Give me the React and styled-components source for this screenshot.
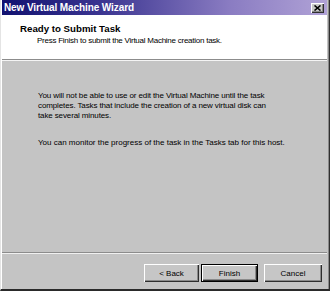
import React from "react";
import styled, { createGlobalStyle } from "styled-components";

const Global = createGlobalStyle`
  html, body { margin: 0; padding: 0; background: #c4c4c4; }
  body { font-family: "Liberation Sans", Arial, sans-serif; }
`;

const Window = styled.div`
  width: 330px;
  height: 291px;
  box-sizing: border-box;
  display: flex;
  flex-direction: column;
  background: #c4c4c4;
  border-left: 1px solid #e4e4e4;
  border-right: 1px solid #303030;
  border-bottom: 2px solid #2a2a2a;
  padding: 0 2px 0 1px;
  box-shadow: inset 1px 0 0 #ffffff, inset -1px 0 0 #8a8a8a;
`;

const TitleBar = styled.div`
  height: 15px;
  flex-shrink: 0;
  display: flex;
  align-items: center;
  justify-content: space-between;
  padding: 0 3px 0 2px;
  background: linear-gradient(90deg, #111170 0%, #3a3490 30%, #8a7cc2 70%, #b0a2d6 100%);
`;

const TitleText = styled.span`
  color: #ffffff;
  font-weight: bold;
  font-size: 10px;
  line-height: 11px;
  letter-spacing: -0.1px;
`;

const CloseButton = styled.div`
  width: 13px;
  height: 10px;
  background: #c8c8c8;
  display: flex;
  align-items: center;
  justify-content: center;
  box-shadow: inset 1px 1px 0 #ffffff, inset -1px -1px 0 #303030, inset -2px -2px 0 #888888;
`;

const Header = styled.div`
  height: 45px;
  flex-shrink: 0;
  background: #ffffff;
  box-sizing: border-box;
  padding: 8px 0 0 18px;
  border-bottom: 1px solid #8c8c8c;
  box-shadow: 0 1px 0 #f4f4f4;
`;

const HeaderTitle = styled.div`
  font-size: 9.7px;
  font-weight: bold;
  line-height: 11px;
  color: #000000;
`;

const HeaderSub = styled.div`
  font-size: 8px;
  line-height: 10px;
  letter-spacing: -0.25px;
  margin: 2px 0 0 17px;
  color: #000000;
`;

const Body = styled.div`
  flex: 1;
  margin-top: 1px;
  padding: 30px 0 0 36px;
`;

const Para = styled.p`
  margin: 0 0 17px;
  font-size: 8px;
  line-height: 10px;
  letter-spacing: ${p => p.$tight ? "-0.12px" : "0"};
  color: #000000;
`;

const Footer = styled.div`
  flex-shrink: 0;
  height: 37px;
  box-sizing: border-box;
  border-top: 1px solid #8c8c8c;
  box-shadow: inset 0 1px 0 #f0f0f0;
  display: flex;
  justify-content: flex-end;
  align-items: flex-start;
  padding: 11px 5px 0 0;
`;

const Button = styled.div`
  width: ${p => p.$w}px;
  height: 18px;
  margin-left: ${p => p.$gap}px;
  box-sizing: border-box;
  display: flex;
  align-items: center;
  justify-content: center;
  font-size: 8px;
  color: #000000;
  background: #c6c6c6;
  border: ${p => (p.$default ? "1px solid #000000" : "none")};
  box-shadow: inset 1px 1px 0 #ffffff, inset -1px -1px 0 #2e2e2e, inset -2px -2px 0 #8a8a8a;
`;

export default function App() {
  return (
    <>
      <Global />
      <Window>
        <TitleBar>
          <TitleText>New Virtual Machine Wizard</TitleText>
          <CloseButton>
            <svg width="7" height="6" viewBox="0 0 7 6">
              <path d="M0.5 0.5 L6.5 5.5 M6.5 0.5 L0.5 5.5" stroke="#000" strokeWidth="1.6" />
            </svg>
          </CloseButton>
        </TitleBar>
        <Header>
          <HeaderTitle>Ready to Submit Task</HeaderTitle>
          <HeaderSub>Press Finish to submit the Virtual Machine creation task.</HeaderSub>
        </Header>
        <Body>
          <Para $tight>
            You will not be able to use or edit the Virtual Machine until the task
            <br />
            completes. Tasks that include the creation of a new virtual disk can
            <br />
            take several minutes.
          </Para>
          <Para>You can monitor the progress of the task in the Tasks tab for this host.</Para>
        </Body>
        <Footer>
          <Button $w={55} $gap={0}>&lt; Back</Button>
          <Button $w={57} $gap={2} $default>Finish</Button>
          <Button $w={58} $gap={6}>Cancel</Button>
        </Footer>
      </Window>
    </>
  );
}
